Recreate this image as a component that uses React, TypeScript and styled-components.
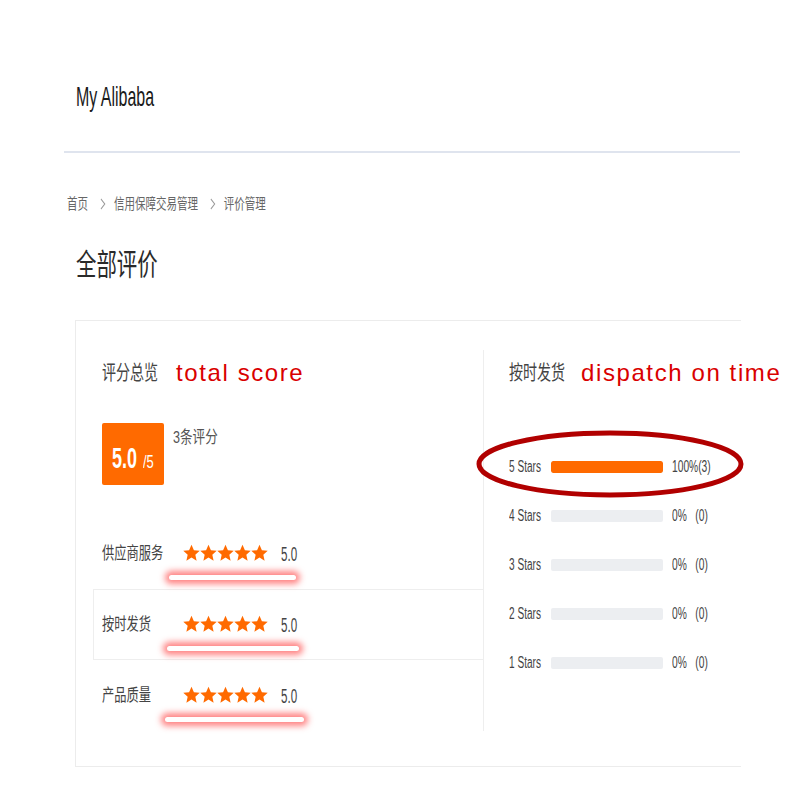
import React from "react";
import styled, { createGlobalStyle } from "styled-components";

const GlobalStyle = createGlobalStyle`
  html, body { margin: 0; padding: 0; background: #fff; }
  body {
    font-family: "Liberation Sans", "Noto Sans CJK SC", sans-serif;
    color: #333;
  }
  * { box-sizing: border-box; }
`;

const Page = styled.div`
  width: 800px;
  height: 800px;
  overflow: hidden;
  background: #fff;
`;

const Squeeze = styled.span<{ $s: number }>`
  display: inline-block;
  white-space: pre;
  transform: scaleX(${(p) => p.$s});
  transform-origin: 0 50%;
`;

const Header = styled.header`
  padding: 80px 0 0 76px;
  height: 114px;
  line-height: 34px;
  font-size: 28px;
  color: #1a1a1a;
`;

const Divider = styled.div`
  margin: 37px 0 0 64px;
  width: 676px;
  height: 2px;
  background: #dfe4ee;
`;

const Breadcrumb = styled.nav`
  margin: 41px 0 0 67px;
  height: 20px;
  line-height: 20px;
  font-size: 15px;
  color: #666;
  display: flex;
  align-items: center;
  transform: scaleX(0.7);
  transform-origin: 0 50%;
  white-space: nowrap;
`;

const Chevron = styled.svg`
  width: 9px;
  height: 12px;
  margin: 0 11px 0 17px;
  flex: none;
`;

const Title = styled.h1`
  margin: 31px 0 0 76px;
  height: 40px;
  line-height: 40px;
  font-size: 30px;
  font-weight: normal;
  color: #2a2a2a;
`;

const Card = styled.section`
  margin: 35px 0 0 75px;
  width: 666px;
  border: 1px solid #ececec;
  border-right: none;
  padding: 29px 0 35px;
  display: flex;
`;

const LeftCol = styled.div`
  width: 408px;
  flex: none;
  height: 381px;
  border-right: 1px solid #eeeeee;
`;

const RightCol = styled.div`
  flex: 1;
  min-width: 0;
  padding-left: 25px;
`;

const Heading = styled.div<{ $pad: number }>`
  margin-top: 9px;
  height: 28px;
  line-height: 28px;
  padding-left: ${(p) => p.$pad}px;
  display: flex;
  align-items: center;
`;

const HeadingZh = styled.div<{ $w: number }>`
  width: ${(p) => p.$w}px;
  flex: none;
  font-size: 20px;
  color: #444;
`;

const Annotation = styled.div`
  font-family: "Liberation Sans", sans-serif;
  font-size: 24px;
  letter-spacing: 1.6px;
  color: #d90000;
  white-space: nowrap;
`;

const ScoreBlock = styled.div`
  margin-top: 36px;
  padding-left: 26px;
  display: flex;
  gap: 9px;
`;

const ScoreBox = styled.div`
  width: 62px;
  height: 62px;
  flex: none;
  background: #ff6a00;
  border-radius: 2px;
  color: #fff;
  display: flex;
  align-items: baseline;
  padding: 21px 0 0 10px;
  line-height: 28px;
`;

const ScoreBig = styled(Squeeze)`
  font-size: 29px;
  font-weight: bold;
`;

const ScoreSmall = styled(Squeeze)`
  font-size: 18px;
  margin-left: -9px;
`;

const CountText = styled.div`
  margin-top: 5px;
  line-height: 20px;
  font-size: 17px;
  color: #555;
`;

const Rows = styled.div`
  margin-top: 33px;
`;

const Row = styled.div<{ $active?: boolean }>`
  height: 71px;
  display: flex;
  align-items: center;
  padding-left: ${(p) => (p.$active ? 8 : 26)}px;
  margin-left: ${(p) => (p.$active ? 17 : 0)}px;
  border: ${(p) => (p.$active ? "1px solid #eeeeee" : "none")};
  border-right: none;
`;

const RowLabel = styled.div`
  width: 82px;
  flex: none;
  font-size: 17px;
  line-height: 20px;
  color: #444;
`;

const Stars = styled.div`
  position: relative;
  display: flex;
  margin-left: -1px;
`;

const StarIcon = styled.svg`
  width: 17px;
  height: 19px;
  display: block;
`;

const RowScore = styled.div`
  margin-left: 13px;
  font-size: 20px;
  line-height: 20px;
  color: #444;
`;

const Glow = styled.div<{ $left: number; $width: number }>`
  position: absolute;
  top: calc(100% + 12px);
  left: ${(p) => p.$left}px;
  width: ${(p) => p.$width}px;
  height: 5px;
  border-radius: 3px;
  background: #fff;
  box-shadow: 0 0 6px 4px rgba(255, 50, 50, 0.6);
`;

const BarList = styled.div`
  margin-top: 55px;
`;

const BarRow = styled.div`
  position: relative;
  height: 49px;
  display: flex;
  align-items: center;
`;

const BarLabel = styled.div`
  width: 42px;
  flex: none;
  font-size: 16px;
  line-height: 18px;
  color: #444;
`;

const Track = styled.div`
  width: 112px;
  height: 12px;
  flex: none;
  border-radius: 2px;
  background: #eceef1;
  overflow: hidden;
`;

const Fill = styled.div`
  height: 100%;
  background: #ff6a00;
  border-radius: 2px;
`;

const Percent = styled.div`
  margin-left: 9px;
  font-size: 16px;
  line-height: 18px;
  color: #444;
`;

const Ellipse = styled.svg`
  position: absolute;
  left: -34px;
  top: -12px;
  width: 270px;
  height: 68px;
  overflow: visible;
  pointer-events: none;
`;

const Star = () => (
  <StarIcon viewBox="0 0 24 26">
    <path
      d="M12 0.5l3.4 7.8 8.2.9-6.2 5.6 1.8 8.3L12 18.8l-7.2 4.3 1.8-8.3L.4 9.2l8.2-.9z"
      fill="#ff6a00"
    />
  </StarIcon>
);

const ratingRows = [
  { label: "供应商服务", glow: [-14, 127] },
  { label: "按时发货", glow: [-16, 132], active: true },
  { label: "产品质量", glow: [-18, 139] },
];

const bars = [
  { label: "5 Stars", pct: 100, text: "100%(3)" },
  { label: "4 Stars", pct: 0, text: "0%   (0)" },
  { label: "3 Stars", pct: 0, text: "0%   (0)" },
  { label: "2 Stars", pct: 0, text: "0%   (0)" },
  { label: "1 Stars", pct: 0, text: "0%   (0)" },
];

const ChevronIcon = () => (
  <Chevron viewBox="0 0 9 12">
    <polyline points="1.5,1 7,6 1.5,11" fill="none" stroke="#999" strokeWidth="1.2" />
  </Chevron>
);

export default function App() {
  return (
    <Page>
      <GlobalStyle />
      <Header>
        <Squeeze $s={0.57}>My Alibaba</Squeeze>
      </Header>
      <Divider />
      <Breadcrumb>
        <span>首页</span>
        <ChevronIcon />
        <span>信用保障交易管理</span>
        <ChevronIcon />
        <span>评价管理</span>
      </Breadcrumb>
      <Title>
        <Squeeze $s={0.68}>全部评价</Squeeze>
      </Title>
      <Card>
        <LeftCol>
          <Heading $pad={26}>
            <HeadingZh $w={74}>
              <Squeeze $s={0.7}>评分总览</Squeeze>
            </HeadingZh>
            <Annotation>total score</Annotation>
          </Heading>
          <ScoreBlock>
            <ScoreBox>
              <ScoreBig $s={0.62}>5.0</ScoreBig>
              <ScoreSmall $s={0.72}>/5</ScoreSmall>
            </ScoreBox>
            <CountText>
              <Squeeze $s={0.74}>3条评分</Squeeze>
            </CountText>
          </ScoreBlock>
          <Rows>
            {ratingRows.map((r) => (
              <Row key={r.label} $active={r.active}>
                <RowLabel>
                  <Squeeze $s={0.72}>{r.label}</Squeeze>
                </RowLabel>
                <Stars>
                  {[0, 1, 2, 3, 4].map((i) => (
                    <Star key={i} />
                  ))}
                  <Glow $left={r.glow[0]} $width={r.glow[1]} />
                </Stars>
                <RowScore>
                  <Squeeze $s={0.58}>5.0</Squeeze>
                </RowScore>
              </Row>
            ))}
          </Rows>
        </LeftCol>
        <RightCol>
          <Heading $pad={0}>
            <HeadingZh $w={72}>
              <Squeeze $s={0.7}>按时发货</Squeeze>
            </HeadingZh>
            <Annotation>dispatch on time</Annotation>
          </Heading>
          <BarList>
            {bars.map((b, i) => (
              <BarRow key={b.label}>
                <BarLabel>
                  <Squeeze $s={0.63}>{b.label}</Squeeze>
                </BarLabel>
                <Track>
                  <Fill style={{ width: `${b.pct}%` }} />
                </Track>
                <Percent>
                  <Squeeze $s={0.64}>{b.text}</Squeeze>
                </Percent>
                {i === 0 && (
                  <Ellipse viewBox="0 0 270 68">
                    <ellipse
                      cx="135"
                      cy="34"
                      rx="131"
                      ry="31"
                      fill="none"
                      stroke="#b10000"
                      strokeWidth="5"
                    />
                  </Ellipse>
                )}
              </BarRow>
            ))}
          </BarList>
        </RightCol>
      </Card>
    </Page>
  );
}
